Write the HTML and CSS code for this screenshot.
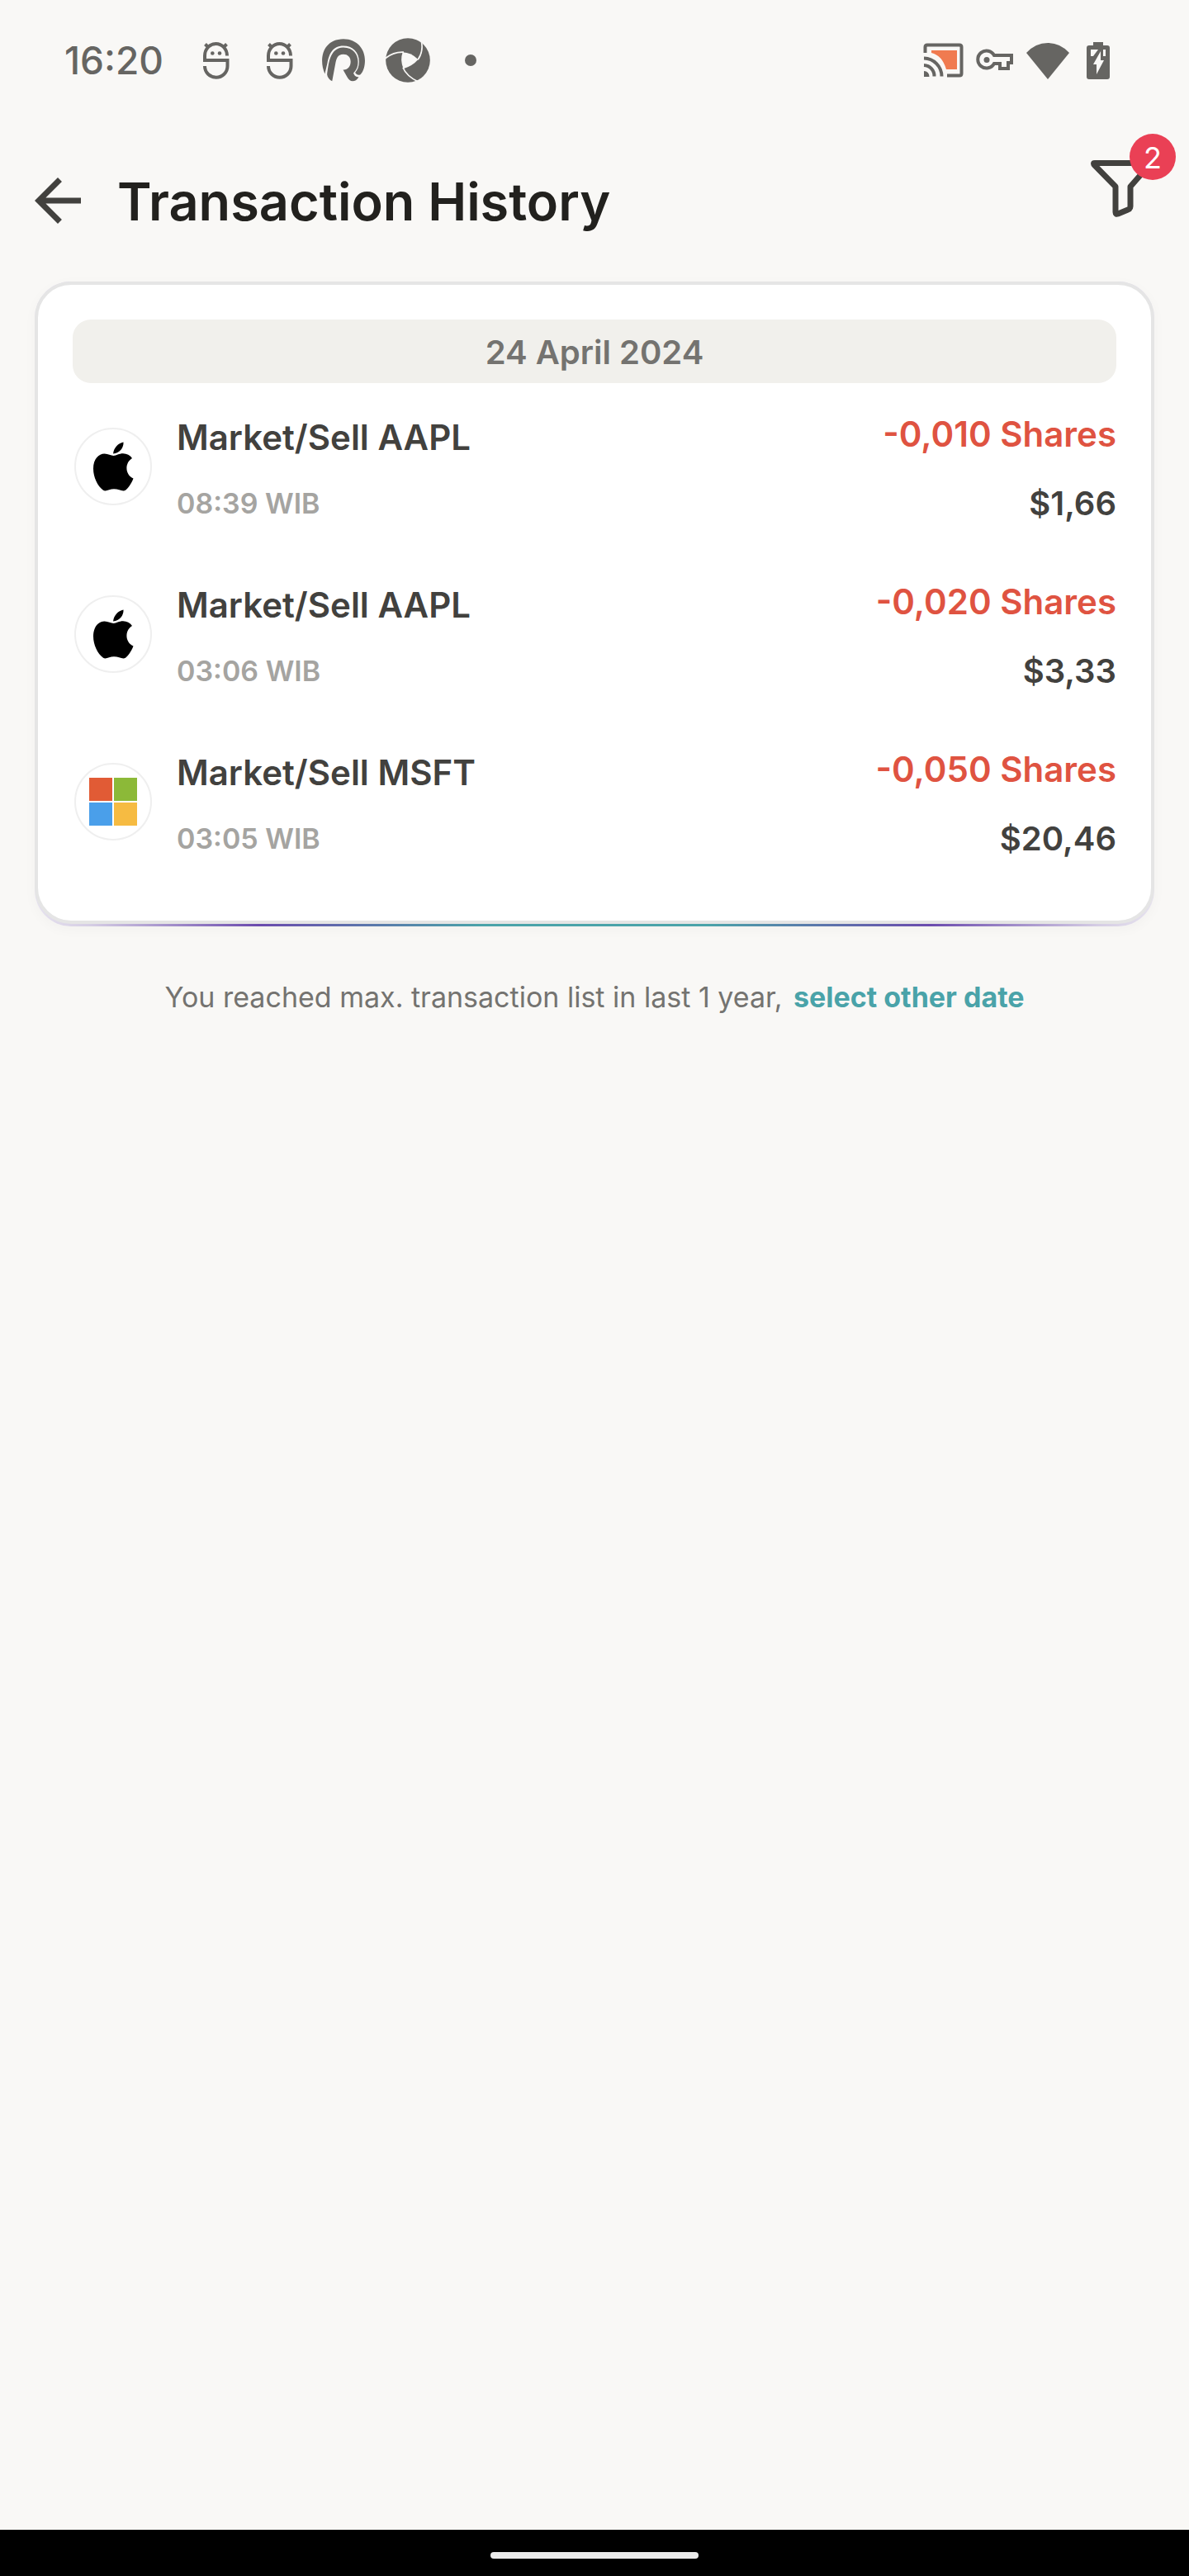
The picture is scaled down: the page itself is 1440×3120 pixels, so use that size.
FILE: index.html
```html
<!DOCTYPE html>
<html lang="en">
<head>
<meta charset="utf-8">
<meta name="viewport" content="width=device-width, initial-scale=1">
<title>Transaction History</title>
<link rel="stylesheet" href="styles.css">
</head>
<body>
<svg class="defs" aria-hidden="true">
  <symbol id="robot" viewBox="0 0 32 45">
    <path d="M29 16.500A13.500 14.500 0 0 0 2 16.500V22H29.500V29A13.500 13.500 0 0 1 2 29" fill="none" stroke="currentColor" stroke-width="4"/>
    <path d="M2.500 2.500 6 6M28.500 2.500 25 6" stroke="currentColor" stroke-width="4"/>
    <circle cx="11.300" cy="13.500" r="2.300" fill="currentColor"/>
    <circle cx="20" cy="13.500" r="2.300" fill="currentColor"/>
  </symbol>
  <symbol id="apple" viewBox="0 0 50 60">
    <path d="M25 14.500C26 7 31 2 37.500.500 38 7 33 14 25 14.500Z"/>
    <path d="M25.500 17C29 17 32 14.300 37 14.300 41.500 14.300 45.500 16.500 48 20 38.500 26 39.500 40 49.500 44.500 47 51 43 56.500 40 58.800 36.500 61 32 57.300 26 57.300 20.500 57.300 16.500 60.800 13 58.800 6 53.500 1 43 1 32.500 1 21 7.500 14.500 14.500 14.500 19 14.500 22.500 17 25.500 17Z"/>
  </symbol>
</svg>

<div class="status">
  <span class="clock">16:20</span>
  <div class="notices">
    <svg class="face"><use href="#robot"/></svg>
    <svg class="face"><use href="#robot"/></svg>
    <svg class="round" viewBox="210 50 159 159">
      <path fill="currentColor" d="M223 178C200 125 216 55 289 54 340 54 366 92 366 130 366 152 360 170 350 180 342 184 336 181 331 174 340 165 345 150 345 135 345 100 322 78 289 78 250 78 238 108 232 140Z"/>
      <path fill="currentColor" d="M231 180C236 150 238 84 289 84 325 84 341 110 341 135 341 155 335 165 325 175 329 186 335 189 344 189 338 200 330 204 322 204 314 204 308 199 303 190L288 163C303 165 315 153 315 135 315 118 305 108 289 108 268 108 264 125 261 140L249 204C240 199 232 190 231 180Z"/>
    </svg>
    <svg class="round" viewBox="440 50 160 160">
      <circle cx="520" cy="130" r="79.500" fill="currentColor"/>
      <path class="cut" d="M501 101Q532 102 557 127 536 151 504 160 491 130 501 101Z"/>
      <path class="slit" d="M438 124Q468 99 505 101M568 60Q577 98 556 128M557 207Q515 187 502 156"/>
    </svg>
    <span class="dot"></span>
  </div>
  <div class="system">
    <svg class="cast" viewBox="0 0 50 42">
      <path fill="#f07b50" d="M10 9H41V32H28Q23 15 10 12Z"/>
      <g fill="none" stroke="currentColor" stroke-width="4">
        <path d="M2.500 12V5Q2.500 2.500 5 2.500H44Q46.500 2.500 46.500 5V37Q46.500 39.500 44 39.500H29M1 18.500A22 22 0 0 1 22.500 40.500M1 27A13 13 0 0 1 13.500 40.500"/>
      </g>
      <path fill="currentColor" d="M1 34A6.500 6.500 0 0 1 7.500 41H1Z"/>
    </svg>
    <svg class="key" viewBox="0 0 46 28">
      <path fill="none" stroke="currentColor" stroke-width="4" d="M22 8H43V17H39V24H29V18H22A10.500 10.500 0 1 1 22 8Z"/>
      <circle cx="13" cy="13.500" r="3.500" fill="currentColor"/>
    </svg>
    <svg class="wifi" viewBox="0 0 54 45">
      <path fill="currentColor" d="M1 13Q12 1 27 1T53 13L27 45Z"/>
    </svg>
    <svg class="battery" viewBox="0 0 28 46">
      <path fill="currentColor" d="M8 1H20V5H25Q28 5 28 8V43Q28 46 25 46H3Q0 46 0 43V8Q0 5 3 5H8Z"/>
      <path class="cut" d="M5 10H14L8 18H5ZM17 12V23H21L12 40V28H8ZM20 10H23V18H20Z"/>
    </svg>
  </div>
</div>

<header class="header">
  <button class="back" type="button" aria-label="Back">
    <svg viewBox="0 0 24 24"><path fill="currentColor" d="M20 11H7.830l5.590-5.590L12 4l-8 8 8 8 1.410-1.410L7.830 13H20v-2z"/></svg>
  </button>
  <h1 class="title">Transaction History</h1>
  <button class="filter" type="button" aria-label="Filter, 2 active">
    <svg viewBox="0 0 84 84"><path fill="none" stroke="currentColor" stroke-width="7" stroke-linejoin="round" d="M10 11.500H72Q76 11.500 74 16L53 40V64Q53 67 50 68L38 73Q35 74 35 71V40L10 14.500Q7 11.500 10 11.500Z"/></svg>
    <span class="badge">2</span>
  </button>
</header>

<main class="main">
  <div class="frame">
    <section class="card">
      <h2 class="date">24 April 2024</h2>
      <ul class="list">
        <li class="item">
          <span class="logo"><svg class="apple"><use href="#apple"/></svg></span>
          <div class="what"><span class="name">Market/Sell AAPL</span><span class="time">08:39 WIB</span></div>
          <div class="amount"><span class="shares">-0,010 Shares</span><span class="price">$1,66</span></div>
        </li>
        <li class="item">
          <span class="logo"><svg class="apple"><use href="#apple"/></svg></span>
          <div class="what"><span class="name">Market/Sell AAPL</span><span class="time">03:06 WIB</span></div>
          <div class="amount"><span class="shares">-0,020 Shares</span><span class="price">$3,33</span></div>
        </li>
        <li class="item">
          <span class="logo">
            <svg class="tiles" viewBox="0 0 58 58"><path fill="#e15b35" d="M0 0h28v28H0z"/><path fill="#8cb938" d="M30 0h28v28H30z"/><path fill="#4a9fea" d="M0 30h28v28H0z"/><path fill="#f6bb42" d="M30 30h28v28H30z"/></svg>
          </span>
          <div class="what"><span class="name">Market/Sell MSFT</span><span class="time">03:05 WIB</span></div>
          <div class="amount"><span class="shares">-0,050 Shares</span><span class="price">$20,46</span></div>
        </li>
      </ul>
    </section>
  </div>
  <p class="note">You reached max. transaction list in last 1 year, <a class="link" href="#">select other date</a></p>
</main>

<div class="navbar"><span class="handle"></span></div>
</body>
</html>
```
FILE: styles.css
```css
* {
  box-sizing: border-box;
}

body {
  margin: 0;
  min-height: 100vh;
  display: flex;
  flex-direction: column;
  background: #f9f8f6;
  color: #42413e;
  font-family: Inter, "Liberation Sans", sans-serif;
}

h1, h2, p, ul {
  margin: 0;
  padding: 0;
}

button {
  padding: 0;
  border: 0;
  background: none;
  color: inherit;
  font: inherit;
}

svg {
  display: block;
}

.defs {
  position: absolute;
  width: 0;
  height: 0;
}

/* Status bar */
.status {
  display: flex;
  align-items: center;
  height: 144px;
  padding: 2px 96px 0 78px;
  color: #666562;
}

.clock {
  width: 168px;
  font-size: 46px;
  font-weight: 500;
}

.notices {
  display: flex;
  align-items: center;
}

.face {
  width: 32px;
  height: 45px;
  margin-right: 45px;
}

.face + .round {
  margin-left: -11px;
}

.round {
  width: 54px;
  height: 54px;
  margin-right: 24px;
}

.dot {
  width: 14px;
  height: 14px;
  margin-left: 18px;
  border-radius: 50%;
  background: currentColor;
}

.cut {
  fill: #f9f8f6;
}

.slit {
  fill: none;
  stroke: #f9f8f6;
  stroke-width: 5;
}

.system {
  display: flex;
  align-items: center;
  gap: 14px;
  margin-left: auto;
}

.cast {
  width: 50px;
  height: 42px;
}

.key {
  width: 46px;
  height: 28px;
}

.wifi {
  width: 54px;
  height: 45px;
}

.battery {
  width: 28px;
  height: 46px;
  margin-left: 6px;
}

/* Header */
.header {
  display: flex;
  align-items: flex-start;
  height: 197px;
  padding: 42px 40px 0 28px;
}

.back,
.filter {
  width: 84px;
  height: 84px;
}

.back {
  margin-top: 15px;
}

.title {
  flex: 1;
  margin-top: 18px;
  padding-left: 30px;
  color: #22211e;
  font-size: 63px;
  font-weight: 600;
  line-height: 80px;
}

.filter {
  position: relative;
}

.badge {
  position: absolute;
  top: -24px;
  right: -24px;
  width: 56px;
  height: 56px;
  border-radius: 50%;
  background: #ea4055;
  color: #fff;
  font-size: 36px;
  line-height: 58px;
  text-align: center;
}

/* Transactions */
.main {
  flex: 1;
  padding: 0 42px;
}

.frame {
  padding-bottom: 3px;
  border-radius: 44px;
  background: linear-gradient(90deg, #e6e2ee, #d5cde4 5%, #6b4bae 20%, #4aa3a9 40%, #4aa3a9 60%, #6b4bae 80%, #d5cde4 95%, #e6e2ee);
  box-shadow: 0 4px 16px rgba(0, 0, 0, 0.03);
}

.card {
  padding: 42px;
  border: 4px solid #e5e5e5;
  border-radius: 44px;
  background: #fff;
}

.date {
  padding-top: 3px;
  border-radius: 22px;
  background: #f1f0ec;
  color: #747370;
  font-size: 40px;
  font-weight: 600;
  line-height: 74px;
  text-align: center;
}

.list {
  list-style: none;
}

.item {
  display: flex;
  height: 203px;
}

.logo {
  display: grid;
  place-items: center;
  width: 94px;
  height: 94px;
  margin: 54px 30px 0 2px;
  border: 2px solid #efefef;
  border-radius: 50%;
}

.apple {
  width: 50px;
  height: 60px;
  color: #000;
  fill: currentColor;
}

.tiles {
  width: 58px;
  height: 58px;
}

.what,
.amount {
  display: flex;
  flex-direction: column;
  gap: 24px;
  font-size: 42px;
  font-weight: 600;
  line-height: 60px;
}

.what {
  flex: 1;
  padding-top: 36px;
}

.amount {
  padding-top: 32px;
  text-align: right;
}

.time {
  color: #a5a4a1;
  font-size: 34px;
  line-height: 52px;
}

.shares {
  color: #df5341;
}

.price {
  font-size: 40px;
}

.note {
  padding-top: 60px;
  color: #747370;
  font-size: 34px;
  line-height: 52px;
  text-align: center;
}

.link {
  margin-left: 4px;
  color: #4aa3a9;
  font-weight: 700;
  text-decoration: none;
}

/* System navigation */
.navbar {
  display: flex;
  justify-content: center;
  align-items: center;
  height: 56px;
  padding-top: 6px;
  background: #000;
}

.handle {
  width: 252px;
  height: 8px;
  border-radius: 4px;
  background: #ebebeb;
}
```
